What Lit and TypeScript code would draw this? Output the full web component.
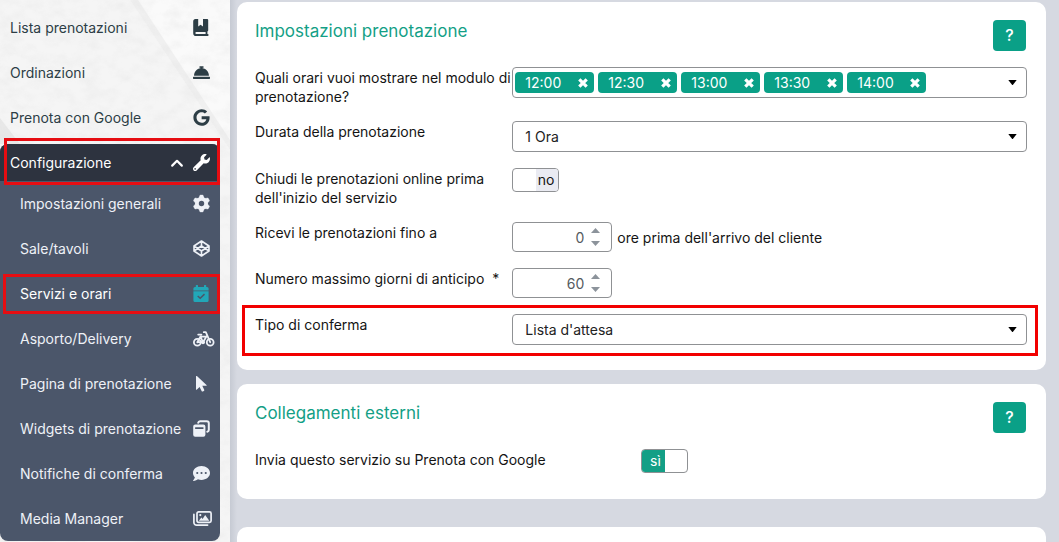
import { LitElement, html, css, svg, nothing, TemplateResult } from "lit";
import { customElement, property } from "lit/decorators.js";

const icons: Record<string, { box: string; width: number; height: number; body: TemplateResult }> = {
  book: {
    box: "0 0 16 17", width: 16, height: 17,
    body: svg`<path fill-rule="evenodd" d="M2.4 0H5.2V7.6L7.6 5.8 10 7.6V0H14.2A1 1 0 0 1 15.2 1V11.6A1 1 0 0 1 14.4 12.5V15H14.6A1 1 0 0 1 14.6 17H3A2.8 2.8 0 0 1 .2 14.2V2.6C.2 1 1 0 2.4 0ZM3.4 12.9A1 1 0 0 0 3.4 15H12.6V12.9Z"/>`,
  },
  bell: {
    box: "0 0 512 512", width: 17, height: 17,
    body: svg`<path d="M288 130.54V112h16c8.84 0 16-7.16 16-16V80c0-8.84-7.16-16-16-16h-96c-8.84 0-16 7.16-16 16v16c0 8.84 7.16 16 16 16h16v18.54C115.49 146.11 32 239.18 32 352h448c0-112.82-83.49-205.89-192-221.46zM496 384H16c-8.84 0-16 7.16-16 16v32c0 8.84 7.16 16 16 16h480c8.84 0 16-7.16 16-16v-32c0-8.84-7.16-16-16-16z"/>`,
  },
  google: {
    box: "0 0 488 512", width: 17, height: 17,
    body: svg`<path d="M488 261.8C488 403.3 391.1 504 248 504 110.8 504 0 393.2 0 256S110.8 8 248 8c66.8 0 123 24.5 166.3 64.9l-67.5 64.9C258.5 52.6 94.3 116.6 94.3 256c0 86.5 69.1 156.6 153.7 156.6 98.2 0 135-70.4 140.8-106.9H248v-85.3h236.1c2.3 12.7 3.9 24.9 3.9 41.4z"/>`,
  },
  wrench: {
    box: "0 0 512 512", width: 17, height: 17,
    body: svg`<path d="M507.73 109.1c-2.24-9.03-13.54-12.09-20.12-5.51l-74.36 74.36-67.88-11.31-11.31-67.88 74.36-74.36c6.62-6.62 3.43-17.9-5.66-20.16-47.38-11.74-99.55.91-136.58 37.93-39.64 39.64-50.55 97.1-34.05 147.2L18.74 402.76c-24.99 24.99-24.99 65.51 0 90.5 24.99 24.99 65.51 24.99 90.5 0l213.21-213.21c50.12 16.71 107.47 5.68 147.37-34.22 37.07-37.07 49.7-89.32 37.91-136.73zM64 472c-13.25 0-24-10.75-24-24 0-13.26 10.75-24 24-24s24 10.74 24 24c0 13.25-10.75 24-24 24z"/>`,
  },
  chevron: {
    box: "0 0 12 8", width: 12, height: 8,
    body: svg`<path d="M1.2 6.6 6 1.8l4.8 4.8" fill="none" stroke="currentColor" stroke-width="2.2" stroke-linecap="round" stroke-linejoin="round"/>`,
  },
  gear: {
    box: "-8.5 -8.5 17 17", width: 17, height: 17,
    body: svg`<circle r="4.6" fill="none" stroke="currentColor" stroke-width="3.8"/>
      ${[0, 60, 120, 180, 240, 300].map((a) => svg`<path transform="rotate(${a})" d="M-2.6-5.4 -1.7-8Q-1.6-8.4-1.1-8.4H1.1Q1.6-8.4 1.7-8L2.6-5.4Z" stroke="currentColor" stroke-width=".4" stroke-linejoin="round"/>`)}`,
  },
  cube: {
    box: "0 0 17 17", width: 17, height: 17,
    body: svg`<path d="M8.5 1 16 6v5L8.5 16 1 11V6ZM8.5 1V6M8.5 11v5M1 6l7.5 5L16 6M1 11l7.5-5 7.5 5" fill="none" stroke="currentColor" stroke-width="1.6" stroke-linejoin="round"/>`,
  },
  calendar: {
    box: "0 0 16 17", width: 16, height: 17,
    body: svg`<path d="M3.4 0h1a.6.6 0 0 1 .6.6V2h6V.6a.6.6 0 0 1 .6-.6h1a.6.6 0 0 1 .6.6V2h.8A1.6 1.6 0 0 1 15.6 3.6V5.4H.4V3.6A1.6 1.6 0 0 1 2 2h.8V.6a.6.6 0 0 1 .6-.6Z"/>
      <path fill-rule="evenodd" d="M.4 6.3H15.6V15.4A1.6 1.6 0 0 1 14 17H2A1.6 1.6 0 0 1 .4 15.4ZM4.2 11.5 7.2 14.3 12 9.7 11 8.6 7.2 12.3 5.2 10.4Z"/>`,
  },
  bike: {
    box: "0 0 22 16", width: 22, height: 16,
    body: svg`<g fill="none" stroke="currentColor" stroke-width="1.8" stroke-linecap="round" stroke-linejoin="round"><circle cx="4.3" cy="11.2" r="3.4"/><circle cx="17.2" cy="11.2" r="3.4"/><path d="M4.3 11.2 7.4 5.6H13.4L10 11.2H4.3M7.4 5.6 10 11.2M5.2 3.6H8.4M10.8 1.2H12.8L17.2 11.2"/></g><circle cx="10" cy="11.2" r="2"/>`,
  },
  pointer: {
    box: "0 0 17 17", width: 17, height: 17,
    body: svg`<path d="M3 1.5V14.2A.5.5 0 0 0 3.9 14.6L6.6 12 8.6 16A.9.9 0 0 0 9.8 16.4L10.8 15.9A.9.9 0 0 0 11.2 14.7L9.3 10.8H13.1A.5.5 0 0 0 13.5 9.9L3.9 1.1A.55.55 0 0 0 3 1.5Z"/>`,
  },
  windows: {
    box: "0 0 17 17", width: 17, height: 17,
    body: svg`<path fill-rule="evenodd" d="M2.2 4.6H10.4A2 2 0 0 1 12.4 6.6V14.8A2 2 0 0 1 10.4 16.8H2.2A2 2 0 0 1 .2 14.8V6.6A2 2 0 0 1 2.2 4.6ZM2.8 7.2A.6.6 0 0 0 2.8 9H9.8A.6.6 0 0 0 9.8 7.2Z"/>
      <path d="M5.2 2.7A2 2 0 0 1 7 1.2H13.8A2 2 0 0 1 15.8 3.2V10A2 2 0 0 1 14.3 11.8" fill="none" stroke="currentColor" stroke-width="2" stroke-linecap="round"/>`,
  },
  comment: {
    box: "0 0 512 512", width: 17, height: 17,
    body: svg`<path fill-rule="evenodd" d="M256 32C114.6 32 0 125.1 0 240c0 49.6 21.4 95 57 130.7C44.5 421.1 2.7 466 2.2 466.5c-2.2 2.3-2.8 5.7-1.5 8.7S4.8 480 8 480c66.3 0 116-31.8 140.6-51.4 32.7 12.3 69 19.4 107.4 19.4 141.4 0 256-93.1 256-208S397.4 32 256 32zM128 272a32 32 0 1 1 0-64 32 32 0 0 1 0 64zm128 0a32 32 0 1 1 0-64 32 32 0 0 1 0 64zm128 0a32 32 0 1 1 0-64 32 32 0 0 1 0 64z"/>`,
  },
  images: {
    box: "0 0 19 15", width: 19, height: 15,
    body: svg`<rect x="4" y=".9" width="14.1" height="10.4" rx="1.6" fill="none" stroke="currentColor" stroke-width="1.7"/><path d="M.9 3.4V11.4A2.7 2.7 0 0 0 3.6 14.1H14.6" fill="none" stroke="currentColor" stroke-width="1.7" stroke-linecap="round"/><circle cx="7.3" cy="4.1" r="1.1"/><path d="M5.8 9.8 8.4 6.6 9.6 7.9 12.2 4 16.3 9.8Z"/>`,
  },
  caret: { box: "0 0 9 5", width: 9, height: 5, body: svg`<path d="M.3 0H8.7L5 4.7Q4.5 5.2 4 4.7Z"/>` },
  up: { box: "0 0 9 5", width: 9, height: 5, body: svg`<path d="M4.5 0 9 5H0Z"/>` },
  down: { box: "0 0 9 5", width: 9, height: 5, body: svg`<path d="M0 0H9L4.5 5Z"/>` },
  cross: {
    box: "0 0 10 10", width: 10, height: 10,
    body: svg`<path d="M1.3 1.3 8.7 8.7M8.7 1.3 1.3 8.7" stroke="currentColor" stroke-width="3.2"/>`,
  },
};

@customElement("ui-icon")
class UiIcon extends LitElement {
  static styles = css`
    :host { display: inline-flex; flex: none; }
    svg { display: block; fill: currentColor; overflow: visible; }
  `;
  @property() name = "";
  render() {
    const i = icons[this.name];
    return html`<svg viewBox=${i.box} width=${i.width} height=${i.height} aria-hidden="true">${i.body}</svg>`;
  }
}

@customElement("side-menu")
class SideMenu extends LitElement {
  static styles = css`
    :host {
      display: block; position: relative; box-sizing: border-box; width: 230px; flex: none;
      padding-top: 9px; overflow: hidden; background: #f5f5f5; color: #2d3e46;
    }
    .texture { position: absolute; inset: 0; width: 100%; height: 100%; }
    nav { position: relative; margin-right: 10px; }
    ul { list-style: none; margin: 0; padding: 0; }
    .top { display: flex; flex-direction: column; gap: 8px; }
    a { display: flex; align-items: center; height: 37px; padding-left: 10px; color: inherit; text-decoration: none; }
    .text { flex: 1; white-space: nowrap; }
    .icon { flex: none; display: flex; width: 27px; }
    .chevron { margin-right: 10px; }
    .group { position: relative; background: #4b566a; border-radius: 8px; color: #eef1f7; }
    .head { background: #2d333f; border-radius: 8px 8px 0 0; color: #fff; }
    .sub li { position: relative; }
    .sub a { height: 45px; padding-left: 20px; }
    .active { color: #fff; }
    .active .icon { color: #22a7b8; }
    .mark { position: absolute; border: 3px solid #e60d12; pointer-events: none; z-index: 1; }
    .mark-head { left: 4px; right: 0; top: -6px; height: 41px; }
    .mark-item { left: 3px; right: 0; top: 3px; bottom: 2px; }
  `;
  private top = [["Lista prenotazioni", "book"], ["Ordinazioni", "bell"], ["Prenota con Google", "google"]];
  private sub = [
    ["Impostazioni generali", "gear"], ["Sale/tavoli", "cube"], ["Servizi e orari", "calendar"],
    ["Asporto/Delivery", "bike"], ["Pagina di prenotazione", "pointer"], ["Widgets di prenotazione", "windows"],
    ["Notifiche di conferma", "comment"], ["Media Manager", "images"],
  ];
  private link(text: string, icon: string, cls = "") {
    return html`<a href="#" class=${cls}><span class="text">${text}</span>
      ${cls === "head" ? html`<ui-icon class="chevron" name="chevron"></ui-icon>` : nothing}
      <span class="icon"><ui-icon name=${icon}></ui-icon></span></a>`;
  }
  render() {
    return html`
      <svg class="texture" aria-hidden="true">
        <filter id="grain"><feTurbulence type="fractalNoise" baseFrequency=".06 .09" numOctaves="4" seed="7"/>
          <feColorMatrix values="0 0 0 0 .75  0 0 0 0 .75  0 0 0 0 .75  1.6 0 0 0 -.62"/></filter>
        <path d="M130 0H230V150Z" fill="#fafafa"/>
        <path d="M130 0H138L230 140V150Z" fill="#f0f0f0"/>
        <path d="M0 118 20 144H0Z" fill="#e8e8e8"/>
        <rect width="100%" height="100%" filter="url(#grain)" opacity=".4"/>
      </svg>
      <nav>
        <ul class="top">
          ${this.top.map(([t, i]) => html`<li>${this.link(t, i)}</li>`)}
          <li class="group">
            ${this.link("Configurazione", "wrench", "head")}
            <span class="mark mark-head"></span>
            <ul class="sub">
              ${this.sub.map(([t, i]) => html`<li>${this.link(t, i, i === "calendar" ? "active" : "")}
                ${i === "calendar" ? html`<span class="mark mark-item"></span>` : nothing}</li>`)}
            </ul>
          </li>
        </ul>
      </nav>`;
  }
}

@customElement("app-root")
class AppRoot extends LitElement {
  static styles = css`
    :host {
      display: flex; height: 100vh; overflow: hidden; background: #d6d9e1; color: #141414;
      font: 14px/19px Inter, "Liberation Sans", sans-serif;
    }
    * { box-sizing: border-box; }
    main {
      flex: 1; min-width: 0; display: flex; flex-direction: column; padding: 2px 13px 0 7px;
      background: linear-gradient(90deg, #c6cad3, #d6d9e1 7px);
    }
    .card { background: #fff; border-radius: 10px; padding: 18px 19px 18px 18px; }
    .card + .card { margin-top: 14px; }
    .booking { padding-bottom: 24px; }
    .links { padding-bottom: 25px; }
    .card.next { flex: none; min-height: 80px; margin-top: 28px; }
    .title { display: flex; justify-content: space-between; align-items: flex-start; }
    h2 { margin: 0; font-size: 17px; line-height: 22px; font-weight: 400; color: #139f86; }
    .help {
      width: 33px; height: 31px; margin-right: 1px; padding: 0; border: 0; border-radius: 4px;
      background: #0aa087; color: #fff; font: 500 16px/31px Inter, sans-serif;
    }
    .rows { display: flex; flex-direction: column; gap: 15px; margin-top: 16px; }
    .row { position: relative; display: grid; grid-template-columns: 1fr 2fr; align-items: start; }
    .row.even { grid-template-columns: 1fr 1fr; margin-top: 16px; }
    .label { padding-top: 1px; }
    .control { display: flex; align-items: center; gap: 5px; padding-bottom: 1px; }
    .box { position: relative; display: flex; flex: 1; align-items: center; height: 31px; }
    select, .tags, .number {
      width: 100%; height: 100%; border: 1px solid #8f9194; border-radius: 4px; background: #fff; color: #222;
      font: inherit;
    }
    select { appearance: none; padding: 0 30px 0 12px; }
    .caret { position: absolute; right: 10px; color: #000; pointer-events: none; }
    .tags { display: flex; align-items: center; gap: 4px; padding: 0 2px; }
    .tag {
      display: flex; align-items: center; justify-content: space-between; width: 79px; height: 21px;
      padding: 0 6px 0 10px; border-radius: 4px; background: #0aa087; color: #fff;
    }
    .tag button { display: flex; padding: 0; border: 0; background: none; color: inherit; }
    .stepper { flex: none; width: 100px; height: 30px; }
    .number { padding: 0 27px 0 8px; text-align: right; color: #555b61; appearance: textfield; }
    .number::-webkit-inner-spin-button { display: none; }
    .arrows { position: absolute; right: 12px; display: flex; flex-direction: column; gap: 8px; color: #8c939b; }
    .arrows button { display: flex; padding: 0; border: 0; background: none; color: inherit; }
    .switch {
      position: relative; display: grid; grid-template-columns: 1fr 1fr; width: 47px; height: 24px; line-height: 22px;
      border: 1px solid #8f9194; border-radius: 4px; overflow: hidden; background: #fff;
    }
    .switch input { position: absolute; inset: 0; margin: 0; opacity: 0; }
    .off { grid-column: 2; background: #eaebf2; padding-left: 2px; }
    .on { grid-column: 1; background: #139f86; color: #fff; padding-left: 8px; }
    .mark {
      position: absolute; left: -13px; right: -11px; top: -9px; bottom: -10px;
      border: 3px solid #f20000; pointer-events: none;
    }
  `;
  private select(id: string, value: string) {
    return html`<div class="box"><select id=${id}><option>${value}</option></select>
      <ui-icon class="caret" name="caret"></ui-icon></div>`;
  }
  private stepper(id: string, value: number) {
    return html`<div class="box stepper"><input class="number" id=${id} type="number" .value=${String(value)} />
      <span class="arrows"><button aria-label="+"><ui-icon name="up"></ui-icon></button>
      <button aria-label="−"><ui-icon name="down"></ui-icon></button></span></div>`;
  }
  render() {
    return html`
      <side-menu></side-menu>
      <main>
        <section class="card booking">
          <div class="title"><h2>Impostazioni prenotazione</h2><button class="help">?</button></div>
          <div class="rows">
            <div class="row">
              <span class="label" id="slots">Quali orari vuoi mostrare nel modulo di prenotazione?</span>
              <div class="control"><div class="box" role="group" aria-labelledby="slots">
                <div class="tags">
                  ${["12:00", "12:30", "13:00", "13:30", "14:00"].map((t) => html`<span class="tag">${t}<button
                    aria-label=${t}><ui-icon name="cross"></ui-icon></button></span>`)}
                </div>
                <ui-icon class="caret" name="caret"></ui-icon>
              </div></div>
            </div>
            <div class="row">
              <label class="label" for="duration">Durata della prenotazione</label>
              <div class="control">${this.select("duration", "1 Ora")}</div>
            </div>
            <div class="row">
              <label class="label" for="close">Chiudi le prenotazioni online prima dell'inizio del servizio</label>
              <div class="control"><span class="switch"><input id="close" type="checkbox" /><span class="off">no</span></span></div>
            </div>
            <div class="row">
              <label class="label" for="until">Ricevi le prenotazioni fino a</label>
              <div class="control">${this.stepper("until", 0)}<span>ore prima dell'arrivo del cliente</span></div>
            </div>
            <div class="row">
              <label class="label" for="days">Numero massimo giorni di anticipo&nbsp; *</label>
              <div class="control">${this.stepper("days", 60)}</div>
            </div>
            <div class="row">
              <label class="label" for="confirm">Tipo di conferma</label>
              <div class="control">${this.select("confirm", "Lista d'attesa")}</div>
              <span class="mark"></span>
            </div>
          </div>
        </section>
        <section class="card links">
          <div class="title"><h2>Collegamenti esterni</h2><button class="help">?</button></div>
          <div class="row even">
            <label class="label" for="google">Invia questo servizio su Prenota con Google</label>
            <div class="control"><span class="switch"><input id="google" type="checkbox" checked /><span class="on">sì</span></span></div>
          </div>
        </section>
        <section class="card next"></section>
      </main>`;
  }
}
